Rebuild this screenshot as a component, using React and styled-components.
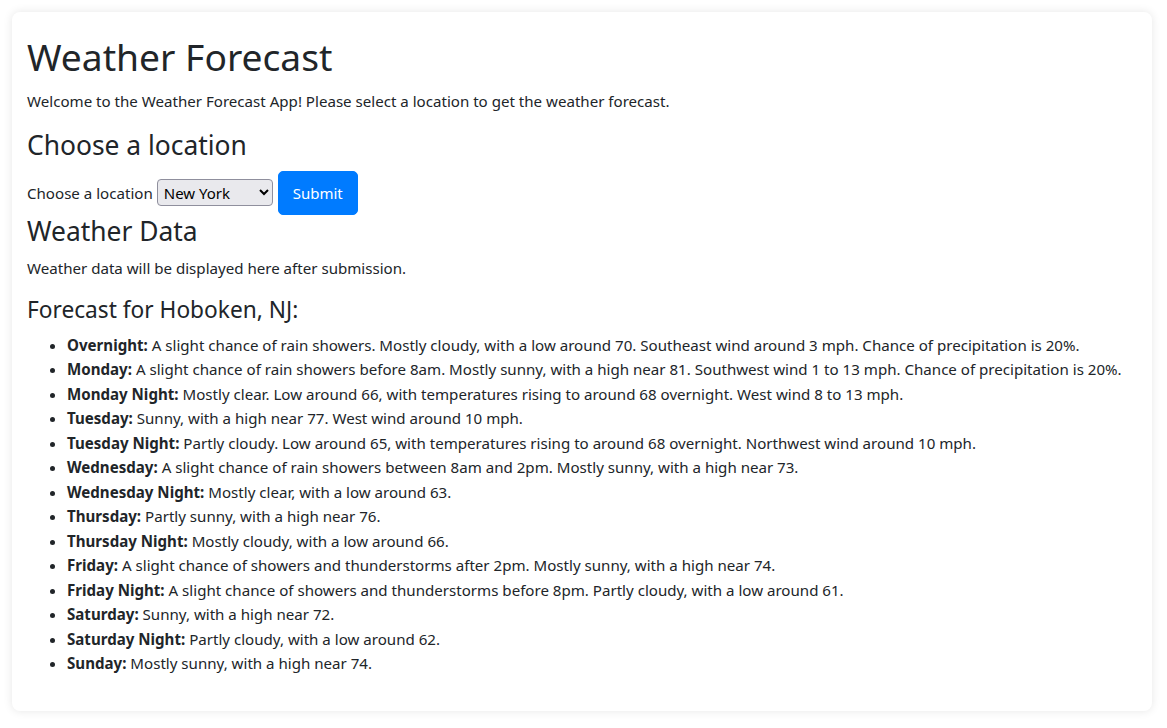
import React, { useState } from "react";
import styled, { createGlobalStyle } from "styled-components";

const GlobalStyle = createGlobalStyle`
  * {
    box-sizing: border-box;
  }
  body {
    margin: 0;
    background: #ffffff;
    color: #212529;
    font-family: "Noto Sans", "Open Sans", sans-serif;
    font-size: 15.1px;
    line-height: 24px;
  }
`;

const forecast = [
  ["Overnight", "A slight chance of rain showers. Mostly cloudy, with a low around 70. Southeast wind around 3 mph. Chance of precipitation is 20%."],
  ["Monday", "A slight chance of rain showers before 8am. Mostly sunny, with a high near 81. Southwest wind 1 to 13 mph. Chance of precipitation is 20%."],
  ["Monday Night", "Mostly clear. Low around 66, with temperatures rising to around 68 overnight. West wind 8 to 13 mph."],
  ["Tuesday", "Sunny, with a high near 77. West wind around 10 mph."],
  ["Tuesday Night", "Partly cloudy. Low around 65, with temperatures rising to around 68 overnight. Northwest wind around 10 mph."],
  ["Wednesday", "A slight chance of rain showers between 8am and 2pm. Mostly sunny, with a high near 73."],
  ["Wednesday Night", "Mostly clear, with a low around 63."],
  ["Thursday", "Partly sunny, with a high near 76."],
  ["Thursday Night", "Mostly cloudy, with a low around 66."],
  ["Friday", "A slight chance of showers and thunderstorms after 2pm. Mostly sunny, with a high near 74."],
  ["Friday Night", "A slight chance of showers and thunderstorms before 8pm. Partly cloudy, with a low around 61."],
  ["Saturday", "Sunny, with a high near 72."],
  ["Saturday Night", "Partly cloudy, with a low around 62."],
  ["Sunday", "Mostly sunny, with a high near 74."],
];

const App = () => {
  const [location, setLocation] = useState("New York");

  return (
    <Page>
      <GlobalStyle />
      <Card>
        <Title>Weather Forecast</Title>
        <Text>Welcome to the Weather Forecast App! Please select a location to get the weather forecast.</Text>

        <SubTitle>Choose a location</SubTitle>
        <Form onSubmit={(e) => e.preventDefault()}>
          <Label htmlFor="location">Choose a location</Label>
          <Select id="location" value={location} onChange={(e) => setLocation(e.target.value)}>
            <option>New York</option>
            <option>Hoboken</option>
            <option>Chicago</option>
          </Select>
          <SubmitButton type="submit">Submit</SubmitButton>
        </Form>

        <SubTitle>Weather Data</SubTitle>
        <Text>Weather data will be displayed here after submission.</Text>

        <SmallTitle>Forecast for Hoboken, NJ:</SmallTitle>
        <List>
          {forecast.map(([day, desc]) => (
            <li key={day}>
              <strong>{day}:</strong> {desc}
            </li>
          ))}
        </List>
      </Card>
    </Page>
  );
};

const Page = styled.div`
  padding: 12px 15px 17px 12px;
`;

const Card = styled.div`
  background: #fff;
  border-radius: 8px;
  box-shadow: 0 0 10px rgba(0, 0, 0, 0.1);
  padding: 21px 15px 19px;
`;

const Title = styled.h1`
  font-size: 37.2px;
  font-weight: 400;
  line-height: 48px;
  margin: 0 0 8px;
`;

const SubTitle = styled.h2`
  font-size: 26.4px;
  font-weight: 400;
  line-height: 33.6px;
  margin: 0 0 8px;
`;

const SmallTitle = styled.h4`
  font-size: 22.7px;
  font-weight: 400;
  line-height: 28.8px;
  margin: 1px 0 8px;
`;

const Text = styled.p`
  margin: 0 0 16px;
`;

const Form = styled.form`
  display: flex;
  align-items: center;
`;

const Label = styled.label`
  margin-right: 4px;
`;

const Select = styled.select`
  width: 116px;
  height: 27px;
  margin-right: 5px;
  padding: 0 2px;
  font-family: inherit;
  font-size: 15px;
  color: #000;
  background: #e9e9ed;
  border: 1px solid #8f8f9d;
  border-radius: 4px;
`;

const SubmitButton = styled.button`
  width: 80px;
  height: 44px;
  padding: 0;
  font-family: inherit;
  font-size: 15px;
  color: #fff;
  background: #007bff;
  border: 1px solid #007bff;
  border-radius: 5px;
  cursor: pointer;
`;

const List = styled.ul`
  margin: 0 0 16px;
  padding-left: 40px;
  line-height: 24.5px;

  strong {
    font-weight: 700;
  }
`;

export default App;
